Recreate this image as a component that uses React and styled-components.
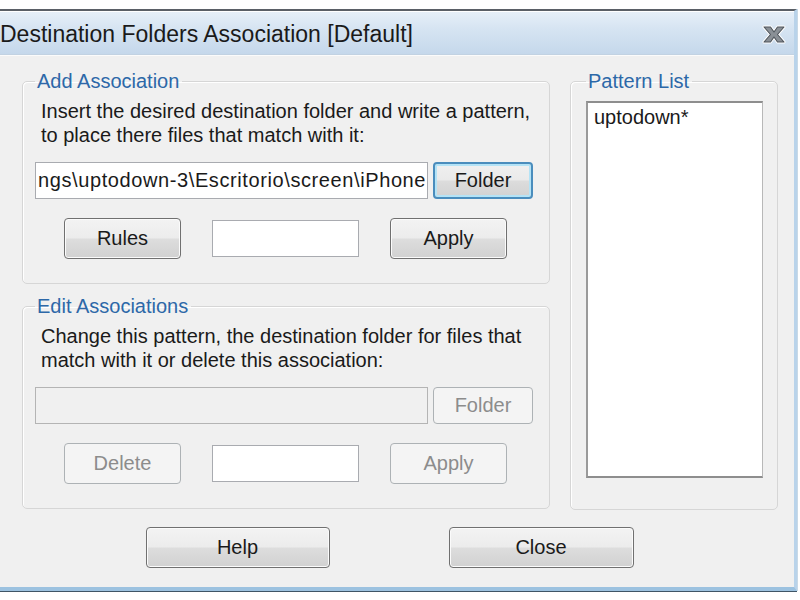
import React from "react";
import styled, { createGlobalStyle } from "styled-components";

const GlobalStyle = createGlobalStyle`
  html, body {
    margin: 0;
    padding: 0;
    background: #ffffff;
    font-family: "Liberation Sans", Arial, sans-serif;
  }
`;

const CROSS =
  "M3 2 L9.5 2 L13 7 L16.5 2 L23 2 L16.5 9.5 L23 17 L16.5 17 L13 12 L9.5 17 L3 17 L9.5 9.5 Z";

const CloseIcon = () => (
  <svg width="26" height="19" viewBox="0 0 26 19">
    <path d={CROSS} fill="#ffffff" stroke="#ffffff" strokeWidth="3" strokeLinejoin="round" />
    <path d={CROSS} fill="#8a9096" stroke="#4e555c" strokeWidth="1.1" strokeLinejoin="round" />
  </svg>
);

const App = () => {
  return (
    <>
      <GlobalStyle />
      <Page>
        <Window>
          <TitleBar>
            <Title>Destination Folders Association [Default]</Title>
            <CloseBox>
              <CloseIcon />
            </CloseBox>
          </TitleBar>
          <Body>
            <Main>
              <LeftColumn>
                <Group>
                  <Legend>Add Association</Legend>
                  <Hint>
                    Insert the desired destination folder and write a pattern,
                    <br />
                    to place there files that match with it:
                  </Hint>
                  <PathRow>
                    <PathField>ngs\uptodown-3\Escritorio\screen\iPhone</PathField>
                    <Button $w={100} $h={37} $focused>
                      Folder
                    </Button>
                  </PathRow>
                  <ActionRow>
                    <Button $w={117} $h={41}>Rules</Button>
                    <PatternField />
                    <Button $w={117} $h={41}>Apply</Button>
                  </ActionRow>
                </Group>
                <Group>
                  <Legend>Edit Associations</Legend>
                  <Hint>
                    Change this pattern, the destination folder for files that
                    <br />
                    match with it or delete this association:
                  </Hint>
                  <PathRow>
                    <PathField $disabled />
                    <Button $w={100} $h={37} disabled>
                      Folder
                    </Button>
                  </PathRow>
                  <ActionRow>
                    <Button $w={117} $h={41} disabled>
                      Delete
                    </Button>
                    <PatternField />
                    <Button $w={117} $h={41} disabled>
                      Apply
                    </Button>
                  </ActionRow>
                </Group>
              </LeftColumn>
              <ListGroup>
                <Legend>Pattern List</Legend>
                <ListBox>
                  <ListItem>uptodown*</ListItem>
                </ListBox>
              </ListGroup>
            </Main>
            <Footer>
              <Button $w={184} $h={41}>Help</Button>
              <Button $w={185} $h={41}>Close</Button>
            </Footer>
          </Body>
        </Window>
      </Page>
    </>
  );
};

const Page = styled.div`
  width: 800px;
  height: 600px;
  padding-top: 9px;
  box-sizing: border-box;
  overflow: hidden;
  background: #ffffff;
`;

const Window = styled.div`
  width: 797px;
  box-sizing: border-box;
  border-top: 2px solid #5a5f66;
  border-right: 3px solid #b9d3ea;
  border-bottom: 4px solid #9cc2e0;
  box-shadow: 0 1px 0 #3f5566, 1px 0 0 #c9d9e6;
  background: #f0f0f0;
`;

const TitleBar = styled.div`
  height: 42px;
  display: flex;
  align-items: center;
  justify-content: space-between;
  padding: 0 7px 0 0;
  background: linear-gradient(#e6eff8 0%, #d6e4f2 40%, #c5d8eb 100%);
  border-top: 1px solid #ffffff;
  border-bottom: 1px solid #c2d2e2;
`;

const Title = styled.div`
  font-family: "Liberation Sans", Arial, sans-serif;
  font-size: 23px;
  color: #1a1a1a;
  padding-top: 2px;
  white-space: nowrap;
`;

const CloseBox = styled.div`
  display: flex;
  align-items: center;
  padding-top: 2px;
`;

const Body = styled.div`
  padding: 14px 15px 19px 22px;
  border-top: 1px solid #fbfbfb;
`;

const Main = styled.div`
  display: flex;
  gap: 20px;
`;

const LeftColumn = styled.div`
  display: flex;
  flex-direction: column;
  gap: 11px;
  width: 528px;
`;

const Group = styled.fieldset`
  margin: 0;
  padding: 0 0 24px 12px;
  min-width: 0;
  border: 1px solid #d6d6d6;
  border-radius: 5px;
  box-shadow: inset 1px 1px 0 #ffffff;
`;

const ListGroup = styled(Group)`
  width: 208px;
  box-sizing: border-box;
  padding: 0 14px 31px 15px;
  display: flex;
  flex-direction: column;
`;

const Legend = styled.legend`
  margin-left: 0;
  padding: 0 3px 0 2px;
  font-size: 20px;
  line-height: 22px;
  color: #2d68a8;
`;

const Hint = styled.div`
  margin: 7px 0 0 6px;
  font-size: 20px;
  line-height: 24px;
  color: #1a1a1a;
  white-space: nowrap;
`;

const PathRow = styled.div`
  display: flex;
  gap: 5px;
  margin-top: 15px;
`;

const PathField = styled.div`
  width: 393px;
  height: 37px;
  box-sizing: border-box;
  border: 1px solid ${(p) => (p.$disabled ? "#b4b4b4" : "#a9abb0")};
  background: ${(p) => (p.$disabled ? "#f0f0f0" : "#ffffff")};
  font-size: 20px;
  line-height: 35px;
  padding-left: 2px;
  color: #1a1a1a;
  white-space: nowrap;
  overflow: hidden;
  letter-spacing: 0.6px;
`;

const ActionRow = styled.div`
  display: flex;
  align-items: center;
  gap: 31px;
  margin: 19px 0 0 29px;
`;

const PatternField = styled.div`
  width: 147px;
  height: 37px;
  box-sizing: border-box;
  border: 1px solid #a9abb0;
  background: #ffffff;
`;

const Button = styled.button`
  width: ${(p) => p.$w}px;
  height: ${(p) => p.$h}px;
  box-sizing: border-box;
  padding: 0;
  margin: 0;
  font-family: "Liberation Sans", Arial, sans-serif;
  font-size: 20px;
  color: #1a1a1a;
  border-radius: 4px;
  border: 1px solid #707070;
  background: linear-gradient(#f3f3f3 0%, #ececec 48%, #dddddd 52%, #d1d1d1 100%);
  box-shadow: inset 0 0 0 1px #fbfbfb;

  ${(p) =>
    p.$focused &&
    `
    border: 2px solid #4a8dbd;
    box-shadow: inset 0 0 0 2px #b4e3f6;
    background: linear-gradient(#f0f0f0 0%, #eaeaea 48%, #dcdcdc 52%, #d2d2d2 100%);
  `}

  &:disabled {
    color: #8c8c8c;
    border-color: #adb2b5;
    background: #f4f4f4;
    box-shadow: none;
  }
`;

const ListBox = styled.div`
  height: 377px;
  margin-top: 9px;
  box-sizing: border-box;
  border-style: solid;
  border-width: 2px 1px 2px 2px;
  border-color: #8e8e8e #b8b8b8 #8e8e8e #9a9a9a;
  background: #ffffff;
  padding: 2px 6px;
`;

const ListItem = styled.div`
  font-size: 20px;
  line-height: 24px;
  color: #1a1a1a;
`;

const Footer = styled.div`
  display: flex;
  justify-content: center;
  gap: 119px;
  margin-top: 17px;
  padding-right: 22px;
`;

export default App;
